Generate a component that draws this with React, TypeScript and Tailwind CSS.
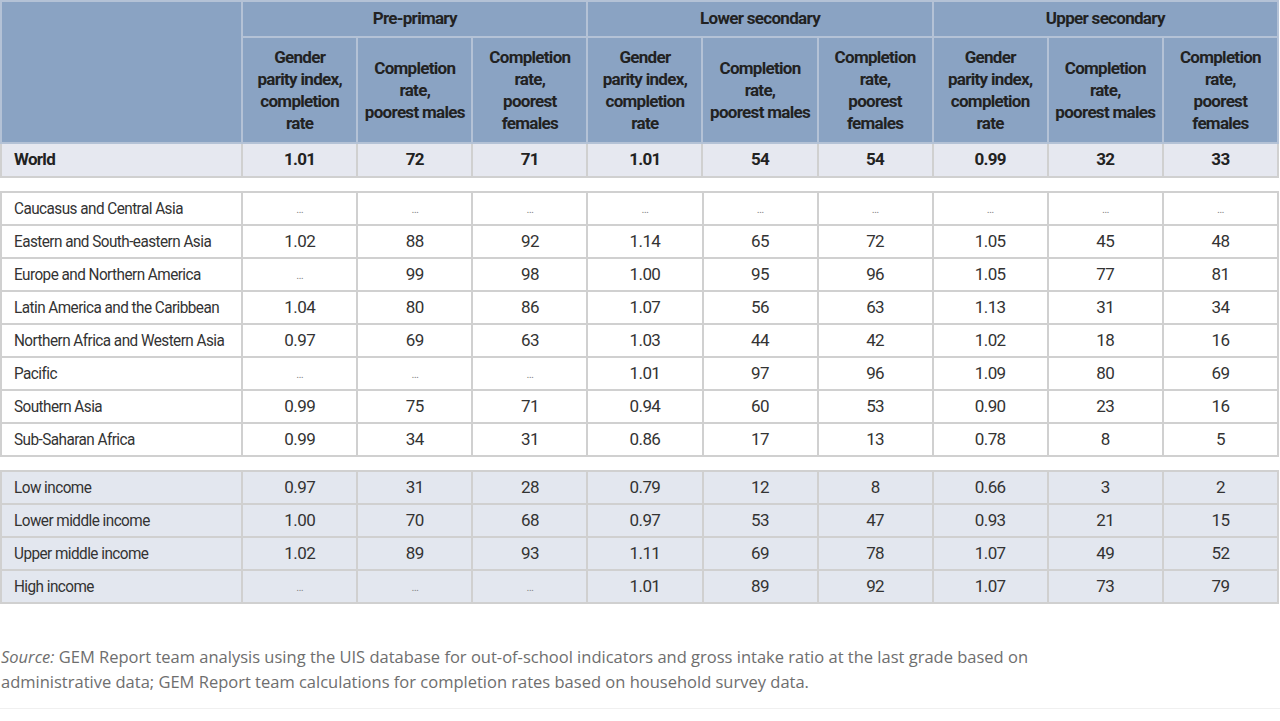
const LEVELS = ["Pre-primary", "Lower secondary", "Upper secondary"];

const SUB_HEADERS = [
  ["Gender", "parity index,", "completion", "rate"],
  ["Completion", "rate,", "poorest males"],
  ["Completion", "rate,", "poorest", "females"],
];

const WORLD = ["1.01", "72", "71", "1.01", "54", "54", "0.99", "32", "33"];

const REGIONS: [string, string[]][] = [
  ["Caucasus and Central Asia", ["…", "…", "…", "…", "…", "…", "…", "…", "…"]],
  ["Eastern and South-eastern Asia", ["1.02", "88", "92", "1.14", "65", "72", "1.05", "45", "48"]],
  ["Europe and Northern America", ["…", "99", "98", "1.00", "95", "96", "1.05", "77", "81"]],
  ["Latin America and the Caribbean", ["1.04", "80", "86", "1.07", "56", "63", "1.13", "31", "34"]],
  ["Northern Africa and Western Asia", ["0.97", "69", "63", "1.03", "44", "42", "1.02", "18", "16"]],
  ["Pacific", ["…", "…", "…", "1.01", "97", "96", "1.09", "80", "69"]],
  ["Southern Asia", ["0.99", "75", "71", "0.94", "60", "53", "0.90", "23", "16"]],
  ["Sub-Saharan Africa", ["0.99", "34", "31", "0.86", "17", "13", "0.78", "8", "5"]],
];

const INCOME: [string, string[]][] = [
  ["Low income", ["0.97", "31", "28", "0.79", "12", "8", "0.66", "3", "2"]],
  ["Lower middle income", ["1.00", "70", "68", "0.97", "53", "47", "0.93", "21", "15"]],
  ["Upper middle income", ["1.02", "89", "93", "1.11", "69", "78", "1.07", "49", "52"]],
  ["High income", ["…", "…", "…", "1.01", "89", "92", "1.07", "73", "79"]],
];

const tableFont = {
  fontFamily: 'Roboto, "Liberation Sans", sans-serif',
};

function Cols() {
  return (
    <colgroup>
      <col className="w-[241px]" />
      {Array.from({ length: 9 }).map((_, i) => (
        <col key={i} className="w-[115px]" />
      ))}
    </colgroup>
  );
}

function Section({ rows, shaded }: { rows: [string, string[]][]; shaded?: boolean }) {
  return (
    <table
      className="w-[1279px] table-fixed border-collapse text-[17px] tracking-[-0.6px] text-[#333]"
      style={tableFont}
    >
      <Cols />
      <tbody>
        {rows.map(([name, vals]) => (
          <tr key={name} className={shaded ? "h-[33px] bg-[#e3e7ef]" : "h-[33px] bg-white"}>
            <td className="whitespace-nowrap border-2 border-[#d0d0d0] px-3">
              <span className="inline-block origin-left scale-x-[0.9]">{name}</span>
            </td>
            {vals.map((v, i) => (
              <td
                key={i}
                className={
                  v === "…"
                    ? "border-2 border-[#d0d0d0] pt-1 text-center text-[11px] text-[#888]"
                    : "border-2 border-[#d0d0d0] text-center"
                }
              >
                {v}
              </td>
            ))}
          </tr>
        ))}
      </tbody>
    </table>
  );
}

export default function App() {
  return (
    <div className="h-[721px] w-[1280px] overflow-hidden bg-white">
      <table
        className="w-[1279px] table-fixed border-collapse text-[17px] tracking-[-0.7px] text-[#222]"
        style={tableFont}
      >
        <Cols />
        <thead>
          <tr className="h-[36px] bg-[#8aa3c3]">
            <th rowSpan={2} className="border-2 border-[#b4c2d6]" />
            {LEVELS.map((l) => (
              <th key={l} colSpan={3} className="border-2 border-[#b4c2d6] font-bold">
                {l}
              </th>
            ))}
          </tr>
          <tr className="h-[106px] bg-[#8aa3c3]">
            {LEVELS.map((l) =>
              SUB_HEADERS.map((lines, i) => (
                <th
                  key={l + i}
                  className="whitespace-nowrap border-2 border-[#b4c2d6] px-1 align-middle font-bold leading-[22px]"
                >
                  {lines.map((t) => (
                    <div key={t}>{t}</div>
                  ))}
                </th>
              ))
            )}
          </tr>
        </thead>
        <tbody>
          <tr className="h-[34px] bg-[#e6e8f0] font-bold">
            <td className="border-2 border-[#d0d0d0] px-3">World</td>
            {WORLD.map((v, i) => (
              <td key={i} className="border-2 border-[#d0d0d0] text-center">
                {v}
              </td>
            ))}
          </tr>
        </tbody>
      </table>

      <div className="mt-[13px]">
        <Section rows={REGIONS} />
      </div>

      <div className="mt-[13px]">
        <Section rows={INCOME} shaded />
      </div>

      <div className="mt-[40px] border-b border-[#f0f0f0] pb-[14px] pl-[1px]">
        <p
          className="text-[16.5px] leading-[25px] text-[#6e6e6e]"
          style={{ fontFamily: '"Open Sans", "Noto Sans", sans-serif' }}
        >
          <span className="italic">Source:</span> GEM Report team analysis using the UIS database for
          out-of-school indicators and gross intake ratio at the last grade based on
          <br />
          administrative data; GEM Report team calculations for completion rates based on household
          survey data.
        </p>
      </div>
    </div>
  );
}
